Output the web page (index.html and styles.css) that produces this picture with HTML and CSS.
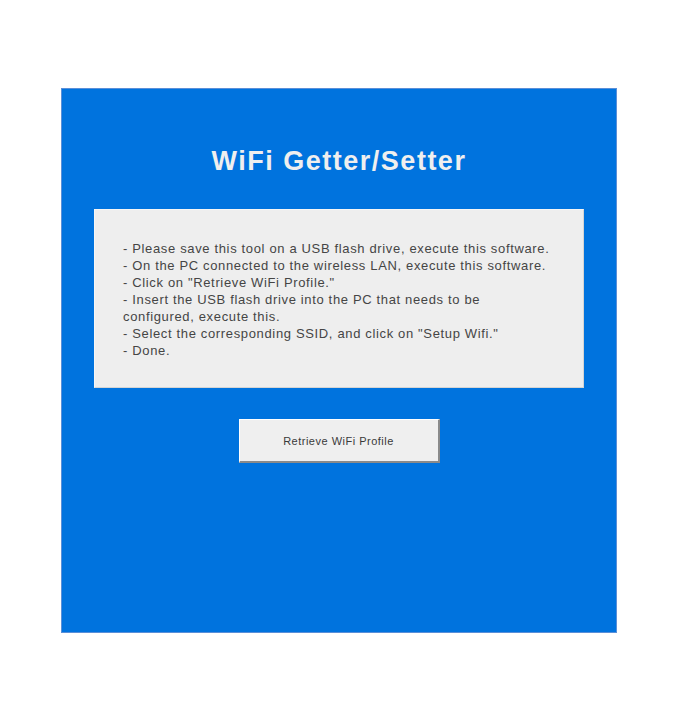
FILE: index.html
```html
<!DOCTYPE html>
<html lang="en">
<head>
  <meta charset="UTF-8">
  <meta name="viewport" content="width=device-width, initial-scale=1.0">
  <title>WiFi Getter/Setter</title>
  <link rel="stylesheet" href="styles.css">
</head>
<body>
  <div class="panel">
    <h1 class="title">WiFi Getter/Setter</h1>

    <div class="howto">
      <p>- Please save this tool on a USB flash drive, execute this software.</p>
      <p>- On the PC connected to the wireless LAN, execute this software.</p>
      <p>- Click on "Retrieve WiFi Profile."</p>
      <p>- Insert the USB flash drive into the PC that needs to be configured, execute this.</p>
      <p>- Select the corresponding SSID, and click on "Setup Wifi."</p>
      <p>- Done.</p>
    </div>

    <button class="btn" type="button">Retrieve WiFi Profile</button>
  </div>
</body>
</html>
```

FILE: styles.css
```css
body {
  margin: 0;
  background-color: #fff;
  font-family: "Liberation Sans", "Noto Sans CJK JP", sans-serif;
}

/* blue main panel */
.panel {
  width: 556px;
  height: 545px;
  margin: 88px 0 0 61px;
  background-color: #0073de;
  border: 1px solid #5a8fd8;
  box-sizing: border-box;
  display: flex;
  flex-direction: column;
  align-items: center;
}

.title {
  margin: 57px 0 0;
  font-size: 27px;
  line-height: 30px;
  font-weight: bold;
  letter-spacing: 1.5px;
  color: #efefef;
}

/* instructions box */
.howto {
  width: 490px;
  height: 179px;
  margin-top: 33px;
  padding: 30px 28px 0 28px;
  box-sizing: border-box;
  background-color: #eeeeee;
  border: 1px solid #f6f6f6;
  border-right-color: #d4d4d4;
  border-bottom-color: #d4d4d4;
  color: #454545;
  font-size: 13px;
  line-height: 17px;
  letter-spacing: 0.65px;
}

.howto p {
  margin: 0;
}

.btn {
  width: 201px;
  height: 44px;
  margin-top: 31px;
  background-color: #efefef;
  border: 1px solid #fff;
  border-right: 2px solid #8a8a8a;
  border-bottom: 2px solid #8a8a8a;
  color: #3a3a3a;
  font-family: inherit;
  font-size: 11px;
  letter-spacing: 0.5px;
  padding: 0;
}
```
